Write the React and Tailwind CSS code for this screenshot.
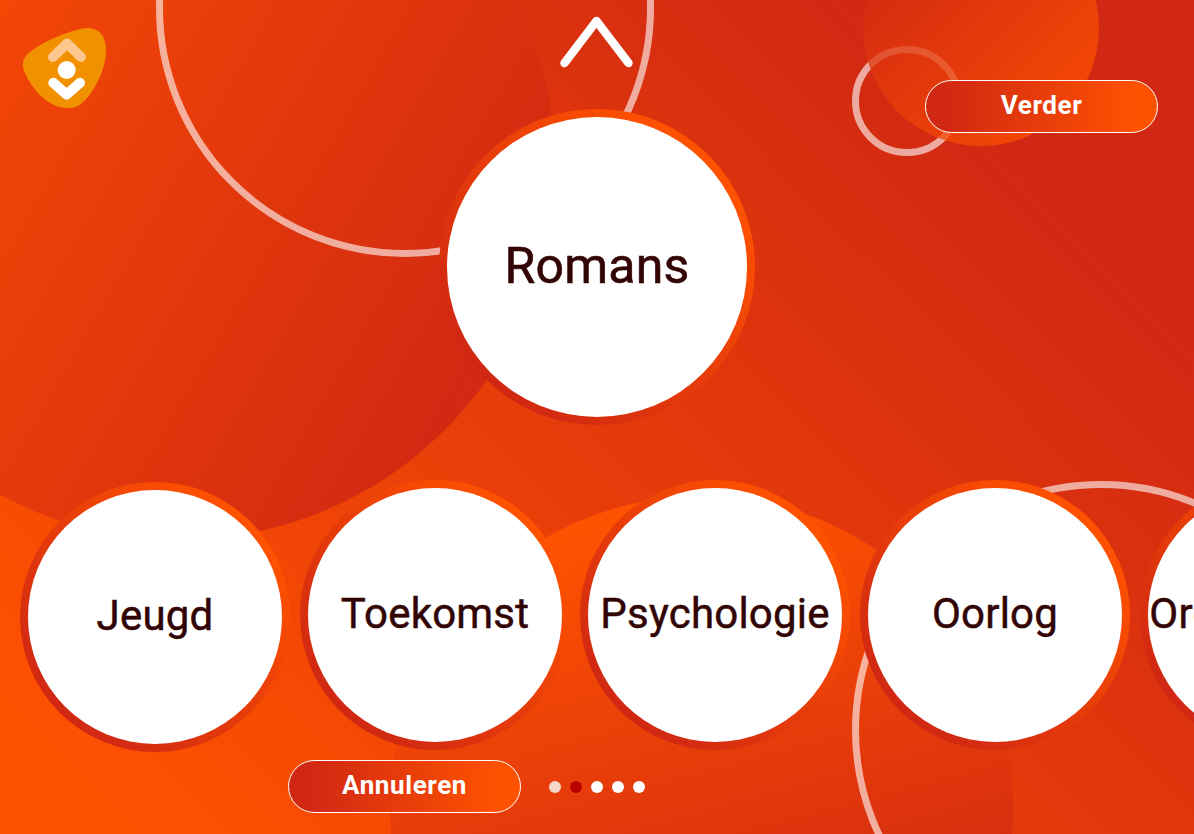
const font = { fontFamily: '"Roboto", "Liberation Sans", sans-serif' };

function Bubble({ label, extra = "", inner = "" }) {
  return (
    <div className={`h-[270px] w-[270px] shrink-0 rounded-full bg-[linear-gradient(45deg,#d02813_15%,#ff5200_85%)] p-[8px] ${extra}`}>
      <div className={`flex h-full w-full items-center justify-center overflow-hidden whitespace-nowrap rounded-full bg-white pb-[4px] text-[42px] font-normal tracking-[0.2px] text-[#320404] [-webkit-text-stroke:0.5px_#320404] ${inner}`}>
        {label}
      </div>
    </div>
  );
}

function Pill({ children }) {
  return (
    <button className="flex h-[53px] w-[233px] items-center justify-center rounded-full border border-white bg-[linear-gradient(90deg,#d02813_8%,#ff5200_92%)] pb-[2px] text-[26px] font-bold tracking-[0.6px] text-white">
      {children}
    </button>
  );
}

function Logo() {
  return (
    <svg width="90" height="90" viewBox="0 0 90 90" className="block">
      <path d="M66 1 C78 1 84 10 84 24 C84 42 72 66 60 76 C54 82 46 82 38 80 C24 77 10 62 3 46 C-1 38 1 30 8 25 C22 14 50 2 66 1 Z" fill="#f29100" />
      <path d="M31 30 L45 16.500 L59 30" fill="none" stroke="#fcc68c" strokeWidth="10" strokeLinecap="round" strokeLinejoin="round" />
      <circle cx="44.700" cy="43" r="9" fill="#fff" />
      <path d="M31.300 55.700 L44.700 67.500 L58 55.700" fill="none" stroke="#fff" strokeWidth="10" strokeLinecap="round" strokeLinejoin="round" />
    </svg>
  );
}

export default function App() {
  return (
    <div className="relative h-[834px] w-[1194px] overflow-hidden bg-[linear-gradient(45deg,#ff5200_5%,#d02813_85%)]" style={font}>
      {/* decorative background */}
      <div className="absolute left-[-197px] top-[-212px] h-[752px] w-[752px] rounded-full bg-[linear-gradient(120deg,#ff5200_5%,#d02813_88%)]" />
      <div className="absolute left-[390px] top-[496px] h-[623px] w-[623px] rounded-full bg-[linear-gradient(165deg,#ff5200_10%,#d02813_75%)]" />
      <div className="absolute left-[156px] top-[-241px] h-[498px] w-[498px] rounded-full border-[7px] border-white/60" />
      <div className="absolute left-[852px] top-[481px] h-[498px] w-[498px] rounded-full border-[7px] border-white/60" />
      <div className="absolute left-[852px] top-[46px] h-[110px] w-[110px] rounded-full border-[7px] border-white/60" />
      <div className="absolute left-[863px] top-[-90px] h-[236px] w-[236px] rounded-full bg-[linear-gradient(135deg,#d02813_10%,#ff5200_85%)] opacity-75" />

      {/* content */}
      <div className="relative flex h-full flex-col">
        <div className="grid h-[425px] grid-cols-[439px_316px_439px]">
          <div className="pl-[22px] pt-[27px]">
            <Logo />
          </div>
          <div className="flex flex-col items-center">
            <svg width="80" height="60" viewBox="0 0 80 60" className="mt-[14px] block">
              <path d="M8 49 L40 7 L72 49" transform="translate(-0.500 0)" fill="none" stroke="#fff" strokeWidth="8.500" strokeLinecap="round" strokeLinejoin="round" />
            </svg>
            <div className="mt-[35px] h-[316px] w-[316px] rounded-full bg-[linear-gradient(45deg,#d02813_15%,#ff5200_85%)] p-[8px]">
              <div className="flex h-full w-full items-center justify-center rounded-full bg-white pb-[2px] text-[50px] font-normal tracking-[0.2px] text-[#320404] [-webkit-text-stroke:0.6px_#320404]">
                Romans
              </div>
            </div>
          </div>
          <div className="flex justify-end pr-[36px] pt-[80px]">
            <Pill>Verder</Pill>
          </div>
        </div>

        <div className="mt-[55px] flex items-start gap-[10px] pl-[20px]">
          <Bubble label="Jeugd" extra="mt-[2px]" />
          <Bubble label="Toekomst" />
          <Bubble label="Psychologie" />
          <Bubble label="Oorlog" />
          <Bubble label="Organisaties" inner="pr-[14px]" />
        </div>

        <div className="mt-[8px] flex items-center pl-[288px]">
          <Pill>Annuleren</Pill>
          <div className="ml-[28px] flex items-center gap-[9px]">
            <span className="h-[12px] w-[12px] rounded-full bg-[#f7d5c9]" />
            <span className="h-[12px] w-[12px] rounded-full bg-[#bb0000]" />
            <span className="h-[12px] w-[12px] rounded-full bg-white" />
            <span className="h-[12px] w-[12px] rounded-full bg-white" />
            <span className="h-[12px] w-[12px] rounded-full bg-white" />
          </div>
        </div>
      </div>
    </div>
  );
}
